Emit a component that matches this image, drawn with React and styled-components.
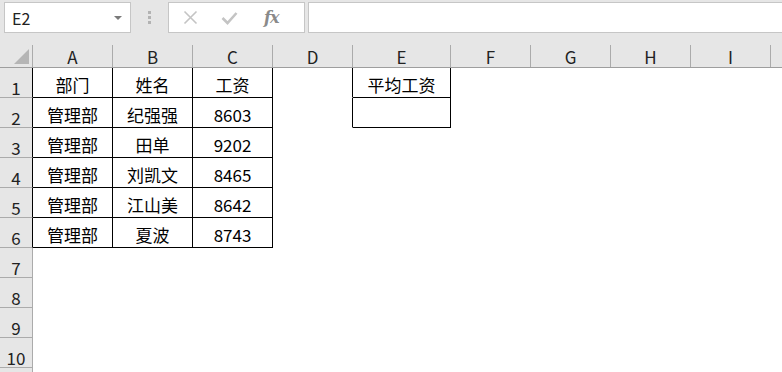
import React from "react";
import styled, { createGlobalStyle } from "styled-components";

const Global = createGlobalStyle`
  html, body { margin: 0; padding: 0; background: #ffffff; }
  * { box-sizing: border-box; }
`;

const FONT = `"Noto Sans CJK SC", "Noto Sans", sans-serif`;

const Window = styled.div`
  width: 782px;
  height: 372px;
  overflow: hidden;
  background: #ffffff;
  font-family: ${FONT};
  color: #000;
`;

const Toolbar = styled.div`
  display: flex;
  align-items: flex-start;
  height: 45px;
  padding: 2px 0 0 4px;
  background: #e6e6e6;
`;

const NameBox = styled.div`
  width: 127px;
  height: 31px;
  background: #fff;
  border: 1px solid #c6c6c6;
  display: flex;
  align-items: center;
  justify-content: space-between;
  padding: 0 8px 0 7px;
  font-family: ${FONT};
  font-size: 16px;
  color: #222;
`;

const Caret = styled.span`
  width: 0;
  height: 0;
  border-left: 4px solid transparent;
  border-right: 4px solid transparent;
  border-top: 4px solid #7a7a7a;
  margin-top: 1px;
`;

const Grip = styled.div`
  width: 37px;
  height: 31px;
  display: flex;
  flex-direction: column;
  align-items: center;
  justify-content: center;
  gap: 2px;
`;

const GripDot = styled.span`
  width: 3px;
  height: 3px;
  background: #b3b3b3;
`;

const FxBox = styled.div`
  width: 137px;
  height: 31px;
  background: #fff;
  border: 1px solid #c6c6c6;
  display: flex;
  align-items: center;
  padding-left: 14px;
  gap: 23px;
`;

const Fx = styled.span`
  font-family: "DejaVu Serif", "Liberation Serif", serif;
  font-style: italic;
  font-weight: bold;
  font-size: 16px;
  color: #8a8a8a;
  letter-spacing: -1px;
  margin-left: 3px;
`;

const FormulaInput = styled.div`
  flex: 1;
  margin-left: 3px;
  margin-right: -10px;
  height: 31px;
  background: #fff;
  border: 1px solid #c6c6c6;
`;

const HeaderRow = styled.div`
  display: flex;
  height: 23px;
  background: #e6e6e6;
  border-bottom: 1px solid #9e9e9e;
`;

const Corner = styled.div`
  position: relative;
  width: 33px;
  flex: none;
  border-right: 1px solid #ababab;
`;

const CornerTriangle = styled.span`
  position: absolute;
  right: 3px;
  bottom: 3px;
  width: 0;
  height: 0;
  border-left: 15px solid transparent;
  border-bottom: 15px solid #b5b5b5;
`;

const ColHead = styled.div`
  width: ${(p) => p.$w}px;
  flex: none;
  border-right: 1px solid #ababab;
  display: flex;
  align-items: center;
  justify-content: center;
  font-size: 17px;
  color: #222;
  padding-top: 1px;
`;

const Row = styled.div`
  display: flex;
  height: 30px;
`;

const RowHead = styled.div`
  width: 33px;
  flex: none;
  background: #e6e6e6;
  border-right: 1px solid ${(p) => (p.$framed ? "#000" : "#ababab")};
  border-bottom: 1px solid #ababab;
  display: flex;
  align-items: center;
  justify-content: center;
  padding-top: 9px;
  font-size: 17px;
  color: #222;
`;

const Cell = styled.div`
  width: ${(p) => p.$w}px;
  flex: none;
  border-right: 1px solid ${(p) => (p.$right ? "#000" : "transparent")};
  border-bottom: 1px solid ${(p) => (p.$bottom ? "#000" : "transparent")};
  display: flex;
  align-items: center;
  justify-content: center;
  padding-top: 3px;
  font-size: 17px;
  color: #000;
  white-space: nowrap;
`;

const COLS = [
  { k: "A", w: 80, label: "A" },
  { k: "B", w: 80, label: "B" },
  { k: "C", w: 80, label: "C" },
  { k: "D", w: 80, label: "D" },
  { k: "E", w: 98, label: "E" },
  { k: "F", w: 80, label: "F" },
  { k: "G", w: 80, label: "G" },
  { k: "H", w: 80, label: "H" },
  { k: "I", w: 80, label: "I" },
  { k: "J", w: 80, label: "" },
];

const DATA = {
  1: { A: "部门", B: "姓名", C: "工资", E: "平均工资" },
  2: { A: "管理部", B: "纪强强", C: "8603", E: "" },
  3: { A: "管理部", B: "田单", C: "9202" },
  4: { A: "管理部", B: "刘凯文", C: "8465" },
  5: { A: "管理部", B: "江山美", C: "8642" },
  6: { A: "管理部", B: "夏波", C: "8743" },
};

const inTable = (r, c) =>
  (r >= 1 && r <= 6 && ["A", "B", "C"].includes(c)) ||
  (r >= 1 && r <= 2 && c === "E");

function XIcon() {
  return (
    <svg width="15" height="15" viewBox="0 0 15 15">
      <path d="M1.5 1.5 L13.5 13.5 M13.5 1.5 L1.5 13.5" stroke="#c4c4c4" strokeWidth="1.6" fill="none" />
    </svg>
  );
}

function CheckIcon() {
  return (
    <svg width="17" height="14" viewBox="0 0 17 14">
      <path d="M1.5 7 L6.5 12 L15.5 2" stroke="#c4c4c4" strokeWidth="2.6" fill="none" />
    </svg>
  );
}

export default function App() {
  const rows = [1, 2, 3, 4, 5, 6, 7, 8, 9, 10, 11];
  return (
    <Window>
      <Global />
      <Toolbar>
        <NameBox>
          E2
          <Caret />
        </NameBox>
        <Grip>
          <GripDot />
          <GripDot />
          <GripDot />
        </Grip>
        <FxBox>
          <XIcon />
          <CheckIcon />
          <Fx>fx</Fx>
        </FxBox>
        <FormulaInput />
      </Toolbar>
      <HeaderRow>
        <Corner>
          <CornerTriangle />
        </Corner>
        {COLS.map((c) => (
          <ColHead key={c.k} $w={c.w}>
            {c.label}
          </ColHead>
        ))}
      </HeaderRow>
      {rows.map((r) => (
        <Row key={r}>
          <RowHead $framed={r <= 6}>{r <= 10 ? r : ""}</RowHead>
          {COLS.map((c) => {
            const framed = inTable(r, c.k);
            const rightFramed = framed || (c.k === "D" && r <= 2);
            return (
              <Cell key={c.k} $w={c.w} $right={rightFramed} $bottom={framed}>
                {(DATA[r] && DATA[r][c.k]) || ""}
              </Cell>
            );
          })}
        </Row>
      ))}
    </Window>
  );
}
